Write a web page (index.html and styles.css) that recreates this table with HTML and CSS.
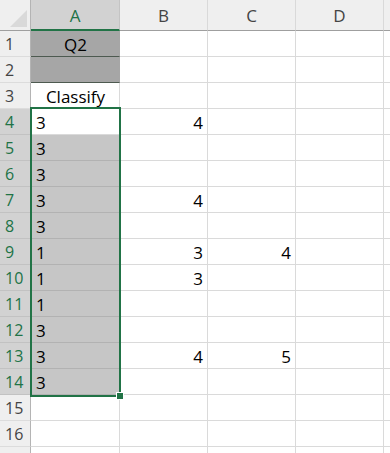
FILE: index.html
```html
<!DOCTYPE html>
<html lang="en">
<head>
<meta charset="utf-8">
<title>Sheet1</title>
<link rel="stylesheet" href="styles.css">
</head>
<body>
<div class="sheet">
  <div class="grid">
    <!-- column headers -->
    <div class="corner"><span class="corner-tri"></span></div>
    <div class="colhead colhead-sel">A</div>
    <div class="colhead">B</div>
    <div class="colhead">C</div>
    <div class="colhead">D</div>
    <div class="colhead colhead-end"></div>

    <!-- row 1 -->
    <div class="rowhead">1</div>
    <div class="cell fill-dark center">Q2</div>
    <div class="cell"></div><div class="cell"></div><div class="cell"></div><div class="cell"></div>

    <!-- row 2 -->
    <div class="rowhead">2</div>
    <div class="cell fill-dark"></div>
    <div class="cell"></div><div class="cell"></div><div class="cell"></div><div class="cell"></div>

    <!-- row 3 -->
    <div class="rowhead">3</div>
    <div class="cell center">Classify</div>
    <div class="cell"></div><div class="cell"></div><div class="cell"></div><div class="cell"></div>

    <!-- row 4 (active cell) -->
    <div class="rowhead rowhead-sel">4</div>
    <div class="cell">3</div>
    <div class="cell num">4</div><div class="cell"></div><div class="cell"></div><div class="cell"></div>

    <div class="rowhead rowhead-sel">5</div>
    <div class="cell sel">3</div>
    <div class="cell"></div><div class="cell"></div><div class="cell"></div><div class="cell"></div>

    <div class="rowhead rowhead-sel">6</div>
    <div class="cell sel">3</div>
    <div class="cell"></div><div class="cell"></div><div class="cell"></div><div class="cell"></div>

    <div class="rowhead rowhead-sel">7</div>
    <div class="cell sel">3</div>
    <div class="cell num">4</div><div class="cell"></div><div class="cell"></div><div class="cell"></div>

    <div class="rowhead rowhead-sel">8</div>
    <div class="cell sel">3</div>
    <div class="cell"></div><div class="cell"></div><div class="cell"></div><div class="cell"></div>

    <div class="rowhead rowhead-sel">9</div>
    <div class="cell sel">1</div>
    <div class="cell num">3</div><div class="cell num">4</div><div class="cell"></div><div class="cell"></div>

    <div class="rowhead rowhead-sel">10</div>
    <div class="cell sel">1</div>
    <div class="cell num">3</div><div class="cell"></div><div class="cell"></div><div class="cell"></div>

    <div class="rowhead rowhead-sel">11</div>
    <div class="cell sel">1</div>
    <div class="cell"></div><div class="cell"></div><div class="cell"></div><div class="cell"></div>

    <div class="rowhead rowhead-sel">12</div>
    <div class="cell sel">3</div>
    <div class="cell"></div><div class="cell"></div><div class="cell"></div><div class="cell"></div>

    <div class="rowhead rowhead-sel">13</div>
    <div class="cell sel">3</div>
    <div class="cell num">4</div><div class="cell num">5</div><div class="cell"></div><div class="cell"></div>

    <div class="rowhead rowhead-sel">14</div>
    <div class="cell sel">3</div>
    <div class="cell"></div><div class="cell"></div><div class="cell"></div><div class="cell"></div>

    <div class="rowhead">15</div>
    <div class="cell"></div><div class="cell"></div><div class="cell"></div><div class="cell"></div><div class="cell"></div>

    <div class="rowhead">16</div>
    <div class="cell"></div><div class="cell"></div><div class="cell"></div><div class="cell"></div><div class="cell"></div>

    <!-- row 17, only its top edge is in view -->
    <div class="rowhead"></div>
    <div class="cell"></div><div class="cell"></div><div class="cell"></div><div class="cell"></div><div class="cell"></div>
  </div>

  <!-- selection outline A4:A14 with fill handle -->
  <div class="selection"><span class="handle"></span></div>
</div>
</body>
</html>
```

FILE: styles.css
```css
html, body {
  margin: 0;
  padding: 0;
  background: #ffffff;
  overflow: hidden;
}

.sheet {
  position: relative;
  width: 390px;
  height: 453px;
  overflow: hidden;
  font-family: "Open Sans", "Liberation Sans", sans-serif;
}

.grid {
  display: grid;
  grid-template-columns: 31px 89px 88px 88px 88px 1fr;
  grid-template-rows: 31px;
  grid-auto-rows: 26px;
}

.grid > div {
  box-sizing: border-box;
}

/* header strip */
.corner {
  position: relative;
  background: #efefef;
  border-right: 1px solid #b4b4b4;
  border-bottom: 1px solid #9f9f9f;
}

.corner-tri {
  position: absolute;
  right: 3px;
  bottom: 3px;
  width: 0;
  height: 0;
  border-left: 17px solid transparent;
  border-bottom: 17px solid #d9d9d9;
}

.colhead {
  background: #efefef;
  border-right: 1px solid #d9d9d9;
  border-bottom: 1px solid #9f9f9f;
  display: flex;
  align-items: center;
  justify-content: center;
  font-family: "Open Sans", "Noto Sans", sans-serif;
  font-size: 17px;
  color: #444444;
  padding-top: 1px;
}

.colhead-sel {
  background: #d2d2d2;
  color: #217346;
  border-bottom: 2px solid #217346;
  border-right-color: #c4c4c4;
}

.colhead-end {
  border-right: none;
}

.rowhead {
  background: #efefef;
  border-right: 1px solid #b4b4b4;
  border-bottom: 1px solid #dcdcdc;
  display: flex;
  align-items: center;
  padding-left: 5px;
  font-family: "Open Sans", "Noto Sans", sans-serif;
  font-size: 16px;
  color: #444444;
}

.rowhead-sel {
  background: #d2d2d2;
  color: #217346;
  border-bottom-color: #c2c2c2;
}

/* cells */
.cell {
  border-right: 1px solid #dadada;
  border-bottom: 1px solid #dadada;
  display: flex;
  align-items: center;
  padding: 2px 4px 0 5px;
  font-size: 17px;
  color: #000000;
  white-space: nowrap;
}

.center {
  justify-content: center;
}

.num {
  justify-content: flex-end;
}

.fill-dark {
  background: #a6a6a6;
  border-bottom-color: #4d5a50;
  border-right-color: #a6a6a6;
}

.sel {
  background: #c6c6c6;
  border-bottom-color: #b2b2b2;
}

/* selection outline */
.selection {
  position: absolute;
  left: 30px;
  top: 107px;
  width: 91px;
  height: 290px;
  box-sizing: border-box;
  border: 2px solid #217346;
  pointer-events: none;
}

.handle {
  position: absolute;
  right: -5px;
  bottom: -5px;
  width: 6px;
  height: 6px;
  background: #217346;
  border: 1px solid #ffffff;
}
```
